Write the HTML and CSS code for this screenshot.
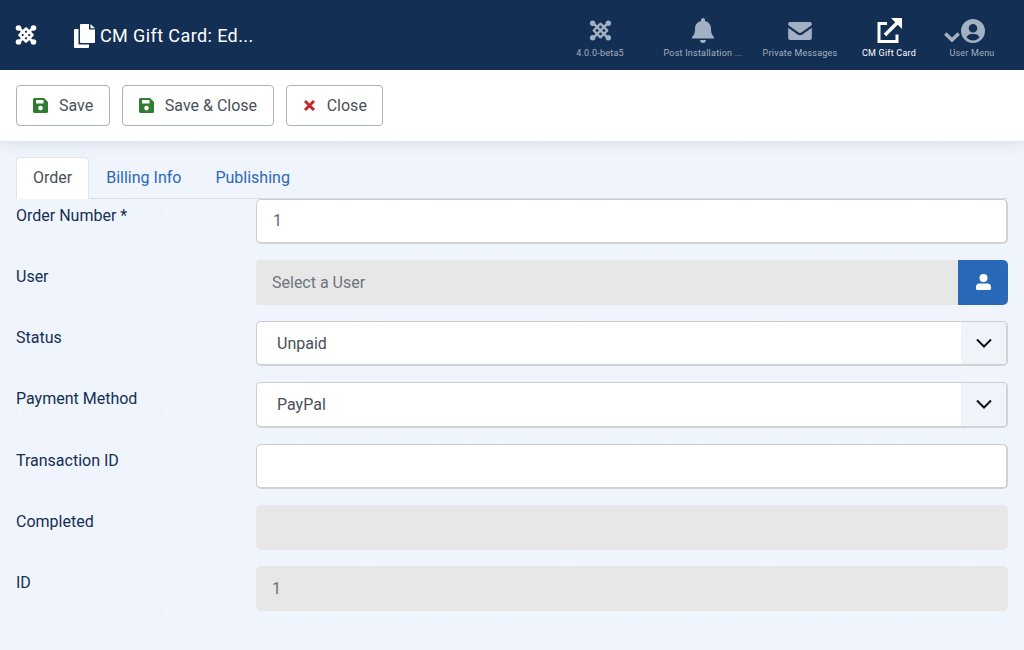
FILE: index.html

```html
<html>
  <head>
    <title>CM Gift Card: Edit</title>
    <link rel="stylesheet" href="styles.css">
  </head>
  <body>
    <header class="topbar">
      <div class="logo">
        <svg width="22" height="22" viewBox="0 0 22 22"><g fill="none" stroke="#fff" stroke-width="2.5" stroke-linecap="round" stroke-linejoin="round"><path d="M4.500 4.500 L17.500 17.500 M17.500 4.500 L4.500 17.500"/><path d="M11 4.500 L17.500 11 L11 17.500 L4.500 11z"/></g><g fill="#fff"><circle cx="3.500" cy="4" r="2.800"/><circle cx="18.500" cy="4" r="2.800"/><circle cx="3.500" cy="18" r="2.800"/><circle cx="18.500" cy="18" r="2.800"/></g></svg>
      </div>
      <div class="page-title">
        <svg width="21" height="24" viewBox="0 0 21 24"><path fill="#fff" d="M7 0h8v5.500h6V18a1 1 0 0 1-1 1H7a1 1 0 0 1-1-1V1a1 1 0 0 1 1-1z"/><path fill="#fff" d="M16.500 0 21 4.200h-4.500z"/><path fill="#fff" d="M1 5h3.500v15.500H15V23a1 1 0 0 1-1 1H1a1 1 0 0 1-1-1V6a1 1 0 0 1 1-1z"/></svg>
        <span>CM Gift Card: Ed...</span>
      </div>
      <nav class="quick">
        <a class="quick-item w1">
          <svg class="q-joomla" width="23" height="23" viewBox="0 0 22 22"><g fill="none" stroke="#a3afc2" stroke-width="2.300" stroke-linecap="round" stroke-linejoin="round"><path d="M4.500 4.500 L17.500 17.500 M17.500 4.500 L4.500 17.500"/><path d="M11 4.500 L17.500 11 L11 17.500 L4.500 11z"/></g><g fill="#a3afc2"><circle cx="3.500" cy="4" r="2.600"/><circle cx="18.500" cy="4" r="2.600"/><circle cx="3.500" cy="18" r="2.600"/><circle cx="18.500" cy="18" r="2.600"/></g></svg>
          <span>4.0.0-beta5</span>
        </a>
        <a class="quick-item w2">
          <svg width="22" height="25" viewBox="0 0 22 25"><path fill="#a3afc2" d="M11 0a2 2 0 0 1 2 2v1c3.700.8 6 3.800 6 7.500 0 5 1 6.500 3 8.500.5.500.2 1.500-.7 1.500H.7c-.9 0-1.200-1-.7-1.500 2-2 3-3.500 3-8.500C3 6.800 5.300 3.800 9 3V2a2 2 0 0 1 2-2z"/><path fill="#a3afc2" d="M8 22h6a3 3 0 0 1-6 0z"/></svg>
          <span>Post Installation ...</span>
        </a>
        <a class="quick-item w3">
          <svg class="q-mail" width="24" height="18" viewBox="0 0 25 19"><path fill="#a3afc2" d="M2 0h21a2 2 0 0 1 2 2v1.200l-11 8c-1 .7-2 .7-3 0l-11-8V2a2 2 0 0 1 2-2z"/><path fill="#a3afc2" d="M0 6l10 7.200c1.500 1.100 3.500 1.100 5 0L25 6v11a2 2 0 0 1-2 2H2a2 2 0 0 1-2-2z"/></svg>
          <span>Private Messages</span>
        </a>
        <a class="quick-item w4 active">
          <svg width="25" height="25" viewBox="0 0 25 25"><path fill="none" stroke="#fff" stroke-width="3" d="M10 5.500H2v18h18v-7"/><path fill="none" stroke="#fff" stroke-width="3.600" d="M8 17 21 4"/><path fill="#fff" d="M14 0h11v11z"/></svg>
          <span>CM Gift Card</span>
        </a>
        <a class="quick-item w5">
          <span class="user-icons">
            <svg class="user-chevron" width="16" height="11" viewBox="0 0 16 11"><path fill="none" stroke="#a3afc2" stroke-width="3.600" d="M1.300 2.500 8 9 14.700 2.500"/></svg>
            <svg width="24" height="24" viewBox="0 0 24 24"><path fill="#a3afc2" fill-rule="evenodd" d="M12 0a12 12 0 1 1 0 24 12 12 0 0 1 0-24zm0 5a4.300 4.300 0 1 0 0 8.600A4.300 4.300 0 0 0 12 5zm-1.500 10C8 15 6 16.500 5.500 18.600A9 9 0 0 0 12 21.500a9 9 0 0 0 6.500-2.900C18 16.500 16 15 13.500 15z"/></svg>
          </span>
          <span>User Menu</span>
        </a>
      </nav>
    </header>

    <div class="toolbar">
      <button class="btn">
        <svg class="ic" width="15" height="15" viewBox="0 0 15 15"><path fill="#2f7d32" fill-rule="evenodd" d="M1.500 0H11l4 4v9.500a1.500 1.500 0 0 1-1.500 1.500h-12A1.500 1.500 0 0 1 0 13.500v-12A1.500 1.500 0 0 1 1.500 0zM3 2v3.500h7.500V2zm4.500 5.800a2.300 2.300 0 1 0 0 4.600 2.300 2.300 0 0 0 0-4.600z"/></svg>
        Save
      </button>
      <button class="btn">
        <svg class="ic" width="15" height="15" viewBox="0 0 15 15"><path fill="#2f7d32" fill-rule="evenodd" d="M1.500 0H11l4 4v9.500a1.500 1.500 0 0 1-1.500 1.500h-12A1.500 1.500 0 0 1 0 13.500v-12A1.500 1.500 0 0 1 1.500 0zM3 2v3.500h7.500V2zm4.500 5.800a2.300 2.300 0 1 0 0 4.600 2.300 2.300 0 0 0 0-4.600z"/></svg>
        Save &amp; Close
      </button>
      <button class="btn">
        <svg class="ic" width="13" height="13" viewBox="0 0 13 13"><path fill="none" stroke="#c62828" stroke-width="3" d="M2 2l9 9M11 2l-9 9"/></svg>
        Close
      </button>
    </div>

    <main class="content">
      <svg class="pattern" width="1024" height="509">
        <defs>
          <pattern id="swirl" width="200" height="200" patternUnits="userSpaceOnUse" patternTransform="translate(67 -4)">
            <g fill="none" stroke="#fff" stroke-width="1">
              <path d="M60 60 92 97Q100 106 108 97L140 60"/>
              <circle cx="73" cy="75" r="27"/>
              <circle cx="127" cy="75" r="27"/>
              <path d="M-45 130C-30 90-15 80 0 80 15 80 30 90 45 130M155 130C170 90 185 80 200 80 215 80 230 90 245 130"/>
              <path d="M0 80V130M200 80V130M70 0 100 30 130 0M70 200 100 170 130 200"/>
            </g>
          </pattern>
        </defs>
        <rect width="1024" height="509" fill="url(#swirl)" opacity=".3"/>
      </svg>
      <div class="tabs">
        <a class="tab active">Order</a>
        <a class="tab">Billing Info</a>
        <a class="tab">Publishing</a>
      </div>
      <div class="form">
        <div class="row">
          <label>Order Number *</label>
          <div class="field">1</div>
        </div>
        <div class="row">
          <label>User</label>
          <div class="field-group">
            <div class="field readonly muted">Select a User</div>
            <div class="user-btn">
              <svg width="15" height="16" viewBox="0 0 15 16"><circle cx="7.500" cy="4" r="4" fill="#fff"/><path fill="#fff" d="M3.500 9.500h8A3.500 3.500 0 0 1 15 13v1.500a1.500 1.500 0 0 1-1.500 1.500h-12A1.500 1.500 0 0 1 0 14.500V13a3.500 3.500 0 0 1 3.500-3.500z"/></svg>
            </div>
          </div>
        </div>
        <div class="row">
          <label>Status</label>
          <div class="field select"><span>Unpaid</span><span class="arrow"><svg width="16" height="10" viewBox="0 0 16 10"><path fill="none" stroke="#111" stroke-width="2" d="M1 1.500l7 7 7-7"/></svg></span></div>
        </div>
        <div class="row">
          <label>Payment Method</label>
          <div class="field select"><span>PayPal</span><span class="arrow"><svg width="16" height="10" viewBox="0 0 16 10"><path fill="none" stroke="#111" stroke-width="2" d="M1 1.500l7 7 7-7"/></svg></span></div>
        </div>
        <div class="row">
          <label>Transaction ID</label>
          <div class="field"></div>
        </div>
        <div class="row">
          <label>Completed</label>
          <div class="field readonly"></div>
        </div>
        <div class="row">
          <label>ID</label>
          <div class="field readonly">1</div>
        </div>
      </div>
    </main>
  </body>
</html>
```

FILE: styles.css

```css
* {box-sizing: border-box;}
html, body {margin: 0; padding: 0; height: 650px; overflow: hidden;}
body {background: #f0f4fc; font-family: Roboto, "Liberation Sans", sans-serif; font-size: 16px; color: #132f53;}

.topbar {display: flex; align-items: center; height: 70px; background: #132f53; color: #fff;}
.logo {display: flex; width: 74px; padding-left: 15px; margin-top: -1px;}
.page-title {display: flex; align-items: center; gap: 5px; font-size: 18px; letter-spacing: .4px;}
.page-title svg {flex: none; margin-top: 1px;}
.quick {display: flex; margin-left: auto; padding-right: 13px;}
.quick-item {display: flex; flex-direction: column; align-items: center; justify-content: flex-end; height: 46px; margin-top: 1px; font-size: 9px; letter-spacing: .22px; color: #a3afc2; white-space: nowrap;}
.quick-item svg {display: block;}
.quick-item > span:last-child {margin-top: 5px; line-height: 11px;}
.quick-item.active {color: #fff;}
.q-joomla {margin-bottom: 1px;}
.q-mail {margin-bottom: 3px;}
.w1 {width: 102px;}
.w2 {width: 104px;}
.w3 {width: 90px;}
.w4 {width: 88px;}
.w5 {width: 78px;}
.user-icons {display: flex; align-items: flex-end; margin-left: -15px;}
.user-chevron {margin: 0 1px 1px 0;}

.toolbar {position: relative; z-index: 1; display: flex; gap: 12px; height: 71px; padding: 15px 16px 0; background: #fff; box-shadow: 0 2px 14px rgba(30, 50, 80, .12);}
.btn {display: flex; align-items: center; height: 41px; padding: 0 15.6px 0 16px; background: #fff; border: 1px solid #aab2bd; border-radius: 4px; font-family: inherit; font-size: 16px; color: #495057;}
.btn .ic {margin-right: 11px;}

.content {position: relative; padding: 16px 16px 0;}
.pattern {position: absolute; left: 0; top: 0;}
.tabs {position: relative; display: flex; height: 42px; border-bottom: 1px solid #d9dee6;}
.tab {padding: 11px 17px 0; height: 42px; line-height: 19px; color: #2a69b8;}
.tab.active {background: #fff; color: #495057; border: 1px solid #e0e4ea; border-bottom: 0; border-radius: 4px 4px 0 0; padding: 10px 16px 0;}

.form {position: relative; display: flex; flex-direction: column; gap: 16px; margin-top: -.4px;}
.row {display: flex; height: 45.25px;}
.row label {width: 240px; flex: none; line-height: 19px; padding-top: 7px;}
.field {display: flex; align-items: center; flex: 1; padding: 0 16px; background: #fff; border: 1px solid #cdcdcd; border-right: 2px solid #d2d2d2; border-bottom: 2px solid #d2d2d2; border-radius: 5px; color: #64696e;}
.field.readonly {background: #e7e7e7; border: 0; color: #6a7077;}
.field.muted {color: #6d757e;}
.field-group {display: flex; flex: 1;}
.field-group .field {border-radius: 4px 0 0 4px;}
.user-btn {display: flex; align-items: center; justify-content: center; width: 50px; flex: none; background: #2a69b8; border-radius: 0 5px 5px 0;}
.select {justify-content: space-between; padding: 0 0 0 20px; overflow: hidden; color: #495057;}
.arrow {display: flex; align-items: center; justify-content: center; width: 45px; height: 100%; background: #eff4fb;}
```
